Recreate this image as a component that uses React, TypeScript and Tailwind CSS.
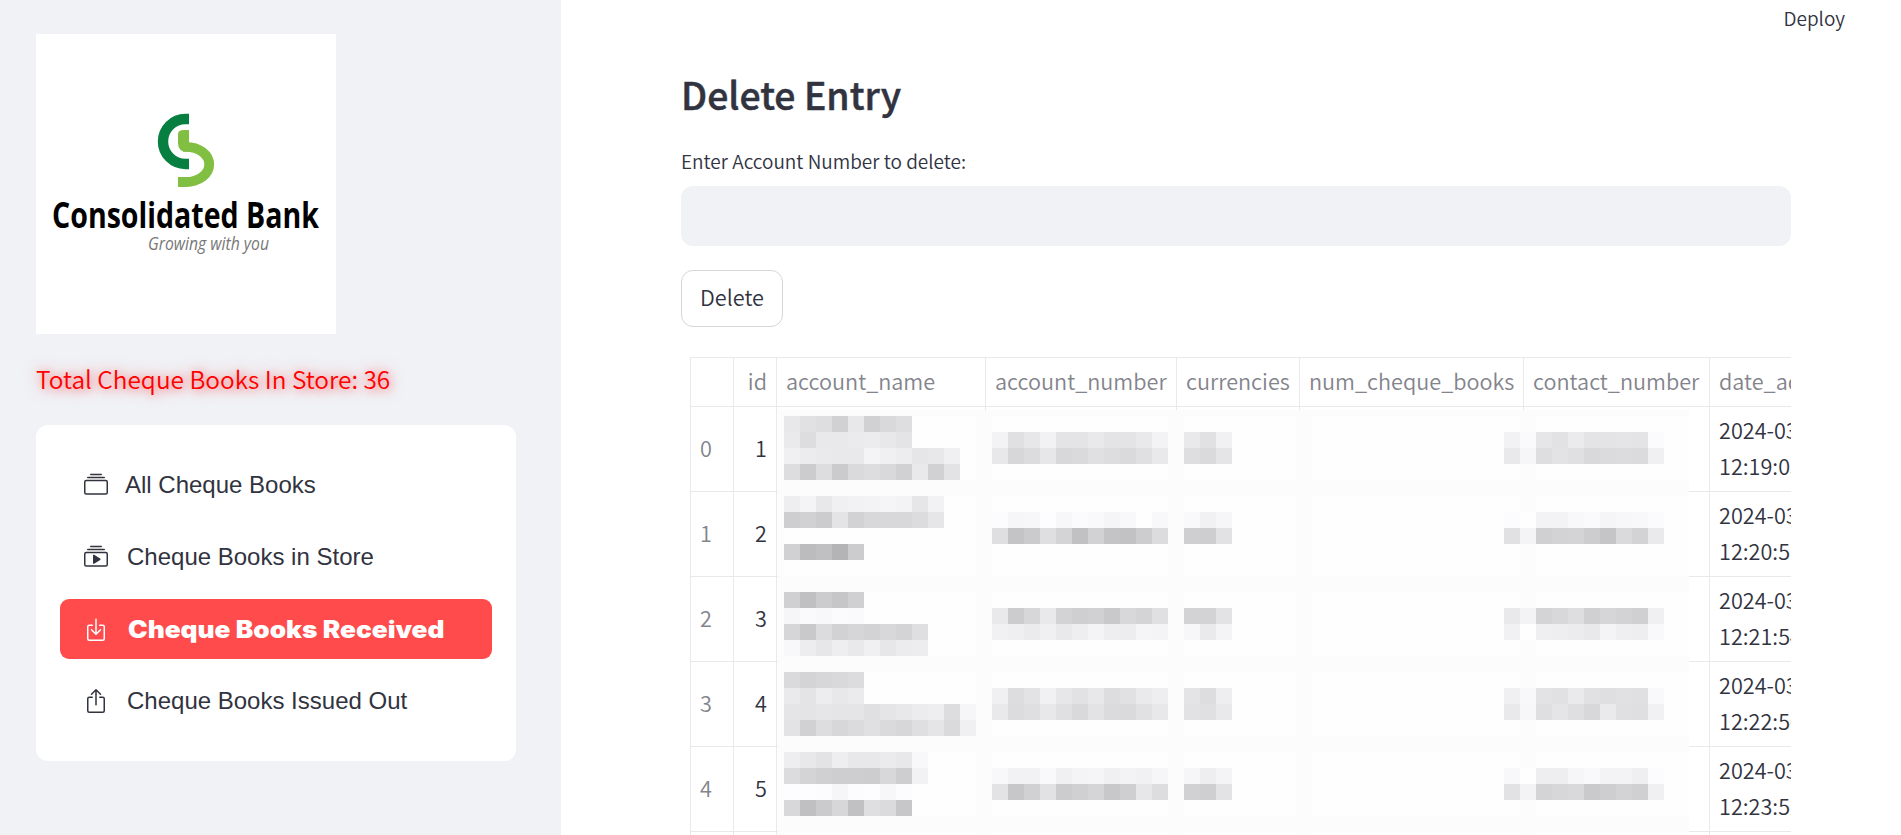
import type { ReactNode } from "react";
import { BsBoxArrowInDown, BsBoxArrowUp, BsCollection, BsCollectionPlay } from "react-icons/bs";

const CELL = 16;

// Each entry: [row, first column, grey levels of consecutive cells]
const mosaic: [number, number, string][] = [
  [0, 0, "e8 e1 de d1 e8 d1 d9 de"],
  [1, 0, "ea dd e9 e9 eb ec e8 e4"],
  [2, 0, "f0 ec ea e9 e9 f4 f0 ed e6 e8 f0"],
  [3, 0, "dd cc dd cb da dd d9 d1 e9 d1 e3"],
  [5, 0, "ee f4 e8 f0 f2 f3 f5 f3 e6 f2"],
  [6, 0, "ce d1 cc e4 d2 d8 d8 d8 dc e6"],
  [8, 0, "d1 bc c0 b4 cc"],
  [11, 0, "d0 c0 cc c6 d0"],
  [12, 0, "f6 fa f8 fb fa"],
  [13, 0, "d6 c9 dc d2 d6 d3 d8 d4 df"],
  [14, 0, "f8 ed e7 ee e9 f0 e7 ec ed"],
  [16, 0, "da d4 d7 d9 dc"],
  [17, 0, "ea e4 ed e8 eb"],
  [18, 0, "e5 e4 e6 e5 e5 e0 e5 e8 ec ee dd f6"],
  [19, 0, "e3 d1 dd d7 db e0 da d7 df e5 da f0"],
  [21, 0, "ee e8 e3 ee e8 e8 eb e8 f8"],
  [22, 0, "dc d4 d0 ce ce cd d8 ce f2"],
  [23, 0, "fd fd fc f6 fc fd f7 fc"],
  [24, 0, "d8 c0 cb d7 c1 df db c7"],
  [1, 13, "f3 e0 e7 f2 e4 e4 e9 e4 e4 e9 f3"],
  [2, 13, "e8 d7 dc e7 d8 da e0 dd da e0 e9"],
  [6, 13, "fc f6 f7 fd f7 fb f9 f5 f8 fe f8"],
  [7, 13, "df c4 cb df d4 c1 d2 c4 c2 cd dc"],
  [12, 13, "e9 cc d7 e9 d3 cf d1 c9 d8 d4 e0"],
  [13, 13, "f1 ef eb f0 e9 ee f4 ee ed f5 f4"],
  [17, 13, "f0 dd e3 f1 e7 e2 e8 dd e1 ea ee"],
  [18, 13, "e9 dc df e8 e0 d9 e3 db da e1 e8"],
  [22, 13, "f8 f2 f2 f9 f0 f4 f5 f0 f3 f1 f6"],
  [23, 13, "e3 c7 d1 e2 cc d0 d5 c8 cf e7 dd"],
  [1, 25, "e9 e1 f1"],
  [2, 25, "de da e5"],
  [6, 25, "f9 f1 f6"],
  [7, 25, "cf ce e2"],
  [12, 25, "d3 d3 e3"],
  [13, 25, "f7 ea f4"],
  [17, 25, "e4 dd ee"],
  [18, 25, "e2 e0 e9"],
  [22, 25, "f6 ee f4"],
  [23, 25, "d1 cf e3"],
  [1, 45, "f2 fa e6 e2 eb e4 e4 e5 e4 fb"],
  [2, 45, "e9 f6 de e3 e0 d9 db dc db f0"],
  [6, 45, "fc fe f3 f3 f8 fa f5 f7 f8 fb"],
  [7, 45, "e1 f4 d0 d3 d4 cd c5 da d3 ea"],
  [12, 45, "e9 f3 d4 d8 de d0 d6 d3 d0 f0"],
  [13, 45, "f1 fe ef ee ec e9 f4 ef ee f9"],
  [17, 45, "f0 f8 e3 e1 ea e1 df e1 e0 f9"],
  [18, 45, "e9 f7 df e5 df d8 ea e0 df f1"],
  [22, 45, "f8 fe ee ee f6 f9 f3 f3 ef fc"],
  [23, 45, "e2 f3 d4 d7 d9 ca ce d3 d0 f0"],
];

// Pixelated cover that hides the private columns of the table
function Mosaic() {
  return (
    <svg
      className="absolute left-[97px] top-[53px]"
      width="911"
      height="425"
      viewBox="-6 -6 911 425"
      shapeRendering="crispEdges"
    >
      <rect x="-6" y="-6" width="911" height="425" fill="#fefefe" />
      {[-1, 12, 24, 32, 46].map((c) => (
        <rect key={c} x={c * CELL} y="-6" width={CELL} height="425" fill="#fcfcfc" />
      ))}
      {[-1, 4, 10, 15, 20, 25].map((r) => (
        <rect key={r} x="-6" y={r * CELL} width="911" height={CELL} fill="#fcfcfc" />
      ))}
      {mosaic.flatMap(([row, col, levels]) =>
        levels.split(" ").map((hex, i) => {
          const v = parseInt(hex, 16);
          return (
            <rect
              key={`${row}-${col + i}`}
              x={(col + i) * CELL}
              y={row * CELL}
              width={CELL}
              height={CELL}
              fill={`rgb(${v},${v},${Math.min(255, v + 2)})`}
            />
          );
        }),
      )}
    </svg>
  );
}

function Logo() {
  return (
    <svg className="block h-[300px] w-[300px] bg-white" viewBox="0 0 300 300">
      <path
        d="M153 85H149.500A22.500 22.500 0 0 0 149.500 130H153"
        fill="none"
        stroke="#067f41"
        strokeWidth="10.400"
      />
      <path
        d="M142 148H150A23.200 17.600 0 0 0 150 112.800H147"
        fill="none"
        stroke="#80bf41"
        strokeWidth="9.800"
      />
      <path d="M153 96V117.700H151Q142 117.700 142 109V100Q142 96 148 96Z" fill="#80bf41" />
      <text
        x="16"
        y="194"
        textLength="267"
        lengthAdjust="spacingAndGlyphs"
        className="fill-black font-['Open_Sans','Noto_Sans',sans-serif] text-[36px] font-bold"
      >
        Consolidated Bank
      </text>
      <text
        x="112"
        y="216"
        textLength="121"
        lengthAdjust="spacingAndGlyphs"
        className="fill-[#777] font-['Open_Sans','Noto_Sans',sans-serif] text-[18px] font-medium italic"
      >
        Growing with you
      </text>
    </svg>
  );
}

function MenuItem({ icon, children, active = false }: { icon: ReactNode; children: ReactNode; active?: boolean }) {
  return (
    <li
      className={
        active
          ? "flex h-[60px] items-center rounded-[9px] bg-[#ff4b4b] pl-6 text-white"
          : "flex h-[60px] items-center rounded-[9px] pl-6 text-[#31333f]"
      }
    >
      <span className="w-[43px] shrink-0 text-2xl">{icon}</span>
      <span
        className={
          active
            ? "ml-px origin-left scale-x-[1.094] whitespace-nowrap pt-[2px] font-[Inter,sans-serif] text-[24px] font-black"
            : "whitespace-nowrap font-['Liberation_Sans',Arial,sans-serif] text-[24px]"
        }
      >
        {children}
      </span>
    </li>
  );
}

const columns = ["", "id", "account_name", "account_number", "currencies", "num_cheque_books", "contact_number", "date_added"];
const rows = [
  { id: 1, time: "12:19:03" },
  { id: 2, time: "12:20:51" },
  { id: 3, time: "12:21:54" },
  { id: 4, time: "12:22:50" },
  { id: 5, time: "12:23:52" },
  { id: 6, time: "12:24:50" },
];

const cell = "border-b border-r border-[#e9e9eb] px-[9px] pb-[7px] pt-[5px] leading-[36px] font-[350] whitespace-nowrap";

export default function App() {
  return (
    <div className="flex h-[835px] w-[1901px] overflow-hidden bg-white font-['Noto_Sans_CJK_SC','Noto_Sans',sans-serif] text-[21.650px] font-[350] text-[#31333f]">
      <aside className="w-[561px] shrink-0 bg-[#f0f2f6] pl-9 pt-[34px]">
        <Logo />
        <p className="mt-[25px] h-[40px] whitespace-nowrap text-[24.420px] leading-[40px] text-[#ff0000] [text-shadow:0_0_15px_rgba(255,0,0,0.5),2px_2px_8px_rgba(255,0,0,0.3)]">
          Total Cheque Books In Store: 36
        </p>
        <ul className="mt-[26px] flex h-[336px] w-[480px] flex-col gap-3 rounded-xl bg-white px-6 pt-[30px]">
          <MenuItem icon={<BsCollection />}>
            <span className="-ml-[2px]">All Cheque Books</span>
          </MenuItem>
          <MenuItem icon={<BsCollectionPlay />}>Cheque Books in Store</MenuItem>
          <MenuItem icon={<BsBoxArrowInDown />} active>
            Cheque Books Received
          </MenuItem>
          <MenuItem icon={<BsBoxArrowUp />}>Cheque Books Issued Out</MenuItem>
        </ul>
      </aside>

      <main className="flex-1">
        <header className="flex h-[38px] items-center justify-end pb-[2px] pr-[56px] text-[19px]">Deploy</header>
        <div className="ml-[120px] w-[1110px]">
          <h3 className="mt-[30px] h-[52px] text-[37.400px] font-medium leading-[52px] [-webkit-text-stroke:0.5px_#31333f]">
            Delete Entry
          </h3>
          <label htmlFor="account" className="mt-[25px] block h-[32px] text-[19px] leading-[32px]">
            Enter Account Number to delete:
          </label>
          <input id="account" className="mt-[9px] block h-[60px] w-full rounded-xl bg-[#f0f2f6] px-4 outline-none" />
          <button className="mt-6 flex h-[57px] w-[102px] items-center justify-center rounded-xl border border-[#d6d6d9] pb-[2px]">
            Delete
          </button>
          <div className="relative mt-[30px] h-[478px] overflow-hidden pl-[9px]">
            <table className="w-[1310px] table-fixed border-separate border-spacing-0 border-l border-t border-[#e9e9eb]">
              <colgroup>
                <col className="w-[43px]" />
                <col className="w-[43px]" />
                <col className="w-[209px]" />
                <col className="w-[191px]" />
                <col className="w-[123px]" />
                <col className="w-[224px]" />
                <col className="w-[186px]" />
                <col />
              </colgroup>
              <thead>
                <tr className="h-[49px] text-left text-[#83848c]">
                  {columns.map((name) => (
                    <th key={name} className={cell}>
                      {name === "id" ? <span className="block text-right">id</span> : name}
                    </th>
                  ))}
                </tr>
              </thead>
              <tbody>
                {rows.map(({ id, time }) => (
                  <tr key={id} className="h-[85px]">
                    <td className={`${cell} text-[#83848c]`}>{id - 1}</td>
                    <td className={`${cell} text-right`}>{id}</td>
                    <td className={cell} />
                    <td className={cell} />
                    <td className={cell} />
                    <td className={cell} />
                    <td className={cell} />
                    <td className={cell}>
                      2024-03-21
                      <br />
                      {time}
                    </td>
                  </tr>
                ))}
              </tbody>
            </table>
            <Mosaic />
          </div>
        </div>
      </main>
    </div>
  );
}
